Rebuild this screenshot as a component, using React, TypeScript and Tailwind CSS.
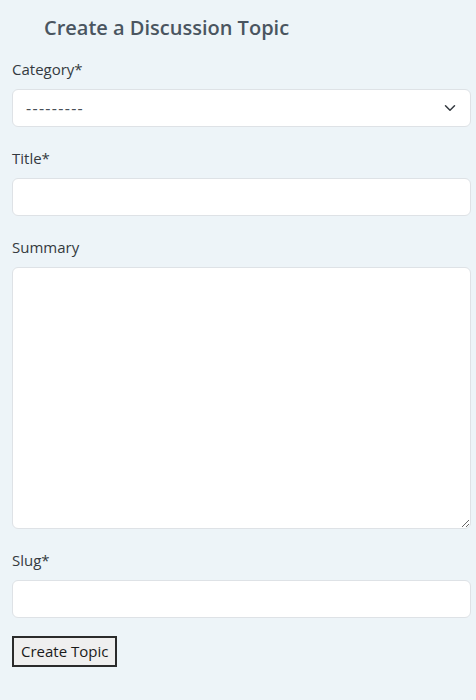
import React, { useState } from "react";

const ChevronDown = () => (
  <svg width="12" height="12" viewBox="0 0 16 16" fill="none" className="pointer-events-none">
    <path d="M2 5l6 6 6-6" stroke="#343a40" strokeWidth="2" strokeLinecap="round" strokeLinejoin="round" />
  </svg>
);

const fieldClass =
  "block w-full h-[38px] px-3 rounded-[6px] border border-[#dee2e6] bg-white text-[16px] text-[#212529] outline-none";

const App = () => {
  const [category, setCategory] = useState("");
  const [title, setTitle] = useState("");
  const [summary, setSummary] = useState("");
  const [slug, setSlug] = useState("");

  return (
    <div
      className="min-h-screen bg-[#edf4f8] pl-3 pr-[5px] pt-[10px] text-[#212529]"
      style={{ fontFamily: "'Open Sans', 'Noto Sans', sans-serif" }}
    >
      <h2 className="pl-8 text-[20px] leading-[36px] font-semibold text-[#4a5560]">Create a Discussion Topic</h2>

      <form onSubmit={(e) => e.preventDefault()} className="pt-[11px]">
        <label className="block mb-2 text-[15px] leading-6 text-[#343a40]">Category*</label>
        <div className="relative mb-[19px]">
          <select
            value={category}
            onChange={(e) => setCategory(e.target.value)}
            className={fieldClass + " appearance-none pl-[13px] tracking-[1.3px] text-[#495057]"}
          >
            <option value="">---------</option>
          </select>
          <span className="absolute right-[15px] top-[13px]">
            <ChevronDown />
          </span>
        </div>

        <label className="block mb-2 text-[15px] leading-6 text-[#343a40]">Title*</label>
        <input value={title} onChange={(e) => setTitle(e.target.value)} className={fieldClass + " mb-[19px]"} />

        <label className="block mb-2 text-[15px] leading-6 text-[#343a40]">Summary</label>
        <textarea
          value={summary}
          onChange={(e) => setSummary(e.target.value)}
          className="block w-full h-[262px] px-3 py-2 mb-[19px] rounded-[6px] border border-[#dee2e6] bg-white text-[16px] outline-none"
        />

        <label className="block mb-2 text-[15px] leading-6 text-[#343a40]">Slug*</label>
        <input value={slug} onChange={(e) => setSlug(e.target.value)} className={fieldClass + " mb-[18px]"} />

        <button
          type="submit"
          className="h-[31px] px-[7px] border-2 border-[#2b2b2b] bg-[#efefef] text-[15px] leading-none text-[#1a1a1a]"
        >
          Create Topic
        </button>
      </form>
    </div>
  );
};

export default App;
